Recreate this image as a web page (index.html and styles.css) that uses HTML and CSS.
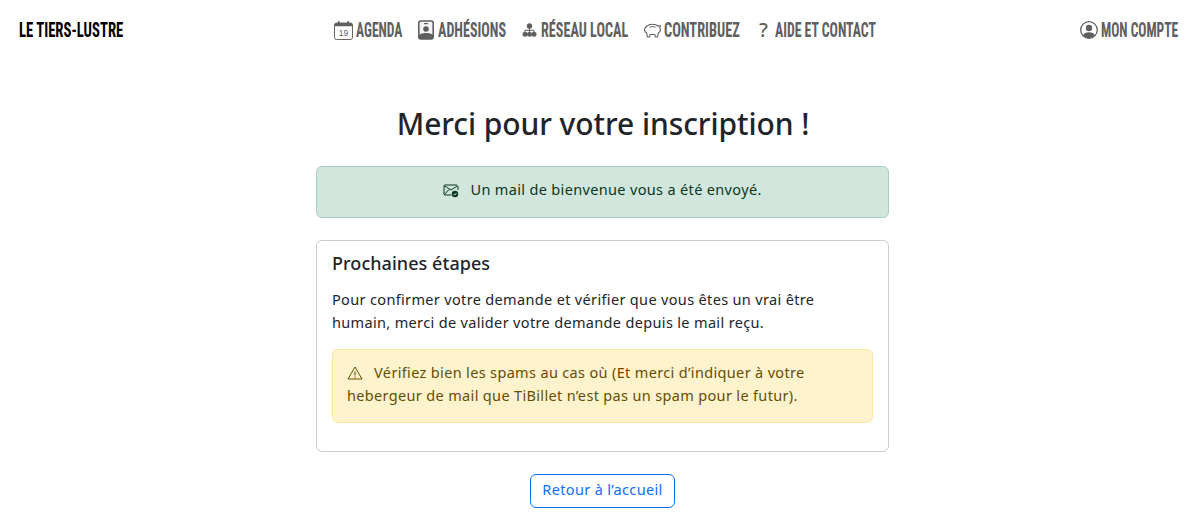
FILE: index.html
```html
<!DOCTYPE html>
<html lang="fr">
<head>
  <meta charset="UTF-8" />
  <meta name="viewport" content="width=device-width, initial-scale=1.0" />
  <title>Merci pour votre inscription</title>
  <link rel="stylesheet" href="styles.css">
</head>
<body>
  <header class="navbar">
    <a class="brand" href="#"><span class="label w-brand">Le Tiers-Lustre</span></a>
    <nav class="nav-center">
      <a class="nav-link" href="#">
        <svg class="nav-icon tight" viewBox="0 0 19 19" width="19" height="19"><rect x=".5" y="2" width="18" height="16.500" rx="2" fill="#fff" stroke="#6d655c" stroke-width="1"/><path d="M.5 4a2 2 0 0 1 2-2h14a2 2 0 0 1 2 2v1.300H.5z" fill="#5f5f5f"/><rect x="4" y="0" width="1.500" height="3" fill="#5f5f5f"/><rect x="13.500" y="0" width="1.500" height="3" fill="#5f5f5f"/><text x="9.500" y="15" class="cal-day">19</text></svg>
        <span class="label w-agenda">Agenda</span></a>
      <a class="nav-link" href="#">
        <svg class="nav-icon" viewBox="0 0 16 20" width="16" height="20"><rect x=".8" y="1" width="14.400" height="18" rx="2" fill="#f4f4f4" stroke="#5f5f5f" stroke-width="1.600"/><rect x="6" y="3" width="4" height="1.200" fill="#5f5f5f"/><circle cx="8" cy="9" r="2.800" fill="#5f5f5f"/><path d="M1 19v-3.500c0-1 2.500-2.500 7-2.500s7 1.500 7 2.500V19z" fill="#5f5f5f"/></svg>
        <span class="label w-adhesions">Adhésions</span></a>
      <a class="nav-link" href="#">
        <svg class="nav-icon" viewBox="0 0 15 14" width="15" height="14"><circle cx="7.500" cy="3" r="2.700" fill="#5f5f5f"/><circle cx="3" cy="11.200" r="2.500" fill="#5f5f5f"/><circle cx="7.500" cy="11.200" r="2.500" fill="#5f5f5f"/><circle cx="12" cy="11.200" r="2.500" fill="#5f5f5f"/><path d="M7.500 5v4M3 9V7.300h9V9" fill="none" stroke="#5f5f5f"/></svg>
        <span class="label w-reseau">Réseau local</span></a>
      <a class="nav-link" href="#">
        <svg class="nav-icon piggy" viewBox="0 0 17 15" width="17" height="15"><path d="M3 3.200C5 .6 12 .6 14 3.200l2.300-.6-.5 2.900.7 1.300c0 1.300-.4 2.200-2 2.900l-1 4.300h-2.100l-.4-2.500H6l-.4 2.500H3.500l-1-4.300C1 9.200.5 8 .5 6.600.5 5.200 1.500 4.200 3 3.200z" fill="none" stroke="#5f5f5f" stroke-width="1.100" stroke-linejoin="round"/><path d="M5.500 4.300c2-.9 4.500-.9 6 0" fill="none" stroke="#5f5f5f" stroke-width="1"/></svg>
        <span class="label w-contribuez">Contribuez</span></a>
      <a class="nav-link" href="#"><span class="help-mark">?</span>
        <span class="label w-aide">Aide et contact</span></a>
    </nav>
    <a class="nav-link" href="#">
      <svg class="nav-icon tight" viewBox="0 0 18 18" width="18" height="18"><circle cx="9" cy="9" r="8.300" fill="none" stroke="#5f5f5f" stroke-width="1.300"/><circle cx="9" cy="7" r="3.200" fill="#5f5f5f"/><path d="M3 14.500c1-2.500 3-3.200 6-3.200s5 .7 6 3.200a8.200 8.200 0 0 1-12 0z" fill="#5f5f5f"/></svg>
      <span class="label w-compte">Mon compte</span></a>
  </header>

  <main class="content">
    <h1>Merci pour votre inscription !</h1>

    <div class="alert alert-success">
      <svg class="alert-icon" viewBox="0 0 16 16" width="16" height="16"><path d="M14 3H2a1 1 0 0 0-1 1v8a1 1 0 0 0 1 1h6.500M1.300 3.800 8 8l6.500-4.200M15 4v4M1.500 12.500 6 7.500" fill="none" stroke="#0a3622" stroke-width="1"/><circle cx="12" cy="12" r="3.200" fill="#0a3622"/><path d="M10.600 12l1.100 1.100 1.800-2.100" fill="none" stroke="#d1e7dd" stroke-width="1"/></svg>
      Un mail de bienvenue vous a été envoyé.
    </div>

    <section class="card">
      <h2>Prochaines étapes</h2>
      <p>Pour confirmer votre demande et vérifier que vous êtes un vrai être humain, merci de valider votre demande depuis le mail reçu.</p>
      <div class="alert alert-warning">
        <svg class="alert-icon" viewBox="0 0 16 16" width="16" height="16"><path d="M8 2 1 14h14z" fill="none" stroke="#664d03" stroke-width="1" stroke-linejoin="round"/><path d="M8 6.500v4M8 11.500v1.200" stroke="#664d03" stroke-width="1.100"/></svg>
        Vérifiez bien les spams au cas où (Et merci d’indiquer à votre hebergeur de mail que TiBillet n’est pas un spam pour le futur).
      </div>
    </section>

    <a class="btn-outline" href="#">Retour à l’accueil</a>
  </main>
</body>
</html>
```

FILE: styles.css
```css
body {
  margin: 0;
  background: #fff;
  color: #212529;
  font-family: "Noto Sans", sans-serif;
  font-size: 14.5px;
  line-height: 22.5px;
  letter-spacing: 0.34px;
}

/* top bar */
.navbar {
  display: flex;
  align-items: center;
  justify-content: space-between;
  height: 60px;
  padding: 0 16px 0 19px;
}
.brand, .nav-link {
  font-family: "Roboto", sans-serif;
  font-stretch: condensed;
  font-weight: 700;
  font-size: 21px;
  letter-spacing: 0;
  text-transform: uppercase;
  text-decoration: none;
}
.brand { color: #000; display: flex; }
.nav-link {
  display: flex;
  align-items: center;
  gap: 4px;
  color: #5f5f5f;
}
.nav-center {
  display: flex;
  gap: 16px;
  margin-left: 7px;
}
.nav-icon { flex: none; }
.tight { margin-right: -1px; }
.piggy { margin-left: -1px; margin-right: -1px; }
.cal-day { font-family: "Liberation Sans", sans-serif; font-size: 8.500px; font-weight: 400; font-stretch: normal; text-anchor: middle; fill: #5f5f5f; }
.help-mark {
  width: 15px;
  text-align: center;
  font-family: "Noto Sans", sans-serif;
  font-stretch: normal;
  font-weight: 500;
  font-size: 20px;
}

/* squeezed to the width of the condensed display face */
.label {
  display: block;
  white-space: nowrap;
  transform-origin: left center;
}
.w-brand { width: 104px; transform: scaleX(0.7); }
.w-agenda { width: 46px; transform: scaleX(0.645); }
.w-adhesions { width: 68px; transform: scaleX(0.67); }
.w-reseau { width: 88px; transform: scaleX(0.675); }
.w-contribuez { width: 76px; transform: scaleX(0.682); }
.w-aide { width: 101px; transform: scaleX(0.655); }
.w-compte { width: 77px; transform: scaleX(0.64); }

/* main column */
.content {
  display: flex;
  flex-direction: column;
  align-items: center;
  width: 573px;
  margin-left: 316px;
  padding-top: 44px;
}
h1 {
  margin: 0 0 22px 1px;
  font-size: 30px;
  font-weight: 500;
  line-height: 40px;
  letter-spacing: -0.07px;
}
.alert {
  border: 1px solid;
  border-radius: 6px;
}
.alert-icon { vertical-align: -3px; margin-right: 7px; }
.alert-success {
  box-sizing: border-box;
  width: 100%;
  height: 52px;
  padding: 11px 16px;
  margin-bottom: 22px;
  text-align: center;
  color: #0a3622;
  background: #d1e7dd;
  border-color: #a3cfbb;
}
.card {
  box-sizing: border-box;
  width: 100%;
  height: 212px;
  padding: 9px 15px;
  margin-bottom: 22px;
  border: 1px solid #ccc;
  border-radius: 6px;
}
h2 {
  margin: 0 0 12px;
  font-size: 18px;
  font-weight: 500;
  line-height: 26px;
  letter-spacing: 0.05px;
}
.card p { margin: 0 0 16px; }
.alert-warning {
  padding: 11px 14px 16px;
  color: #664d03;
  background: #fff3cd;
  border-color: #ffe69c;
}
.btn-outline {
  box-sizing: border-box;
  width: 145px;
  height: 34px;
  padding-top: 3px;
  text-align: center;
  color: #0d6efd;
  border: 1px solid #0d6efd;
  border-radius: 6px;
  text-decoration: none;
}
```
